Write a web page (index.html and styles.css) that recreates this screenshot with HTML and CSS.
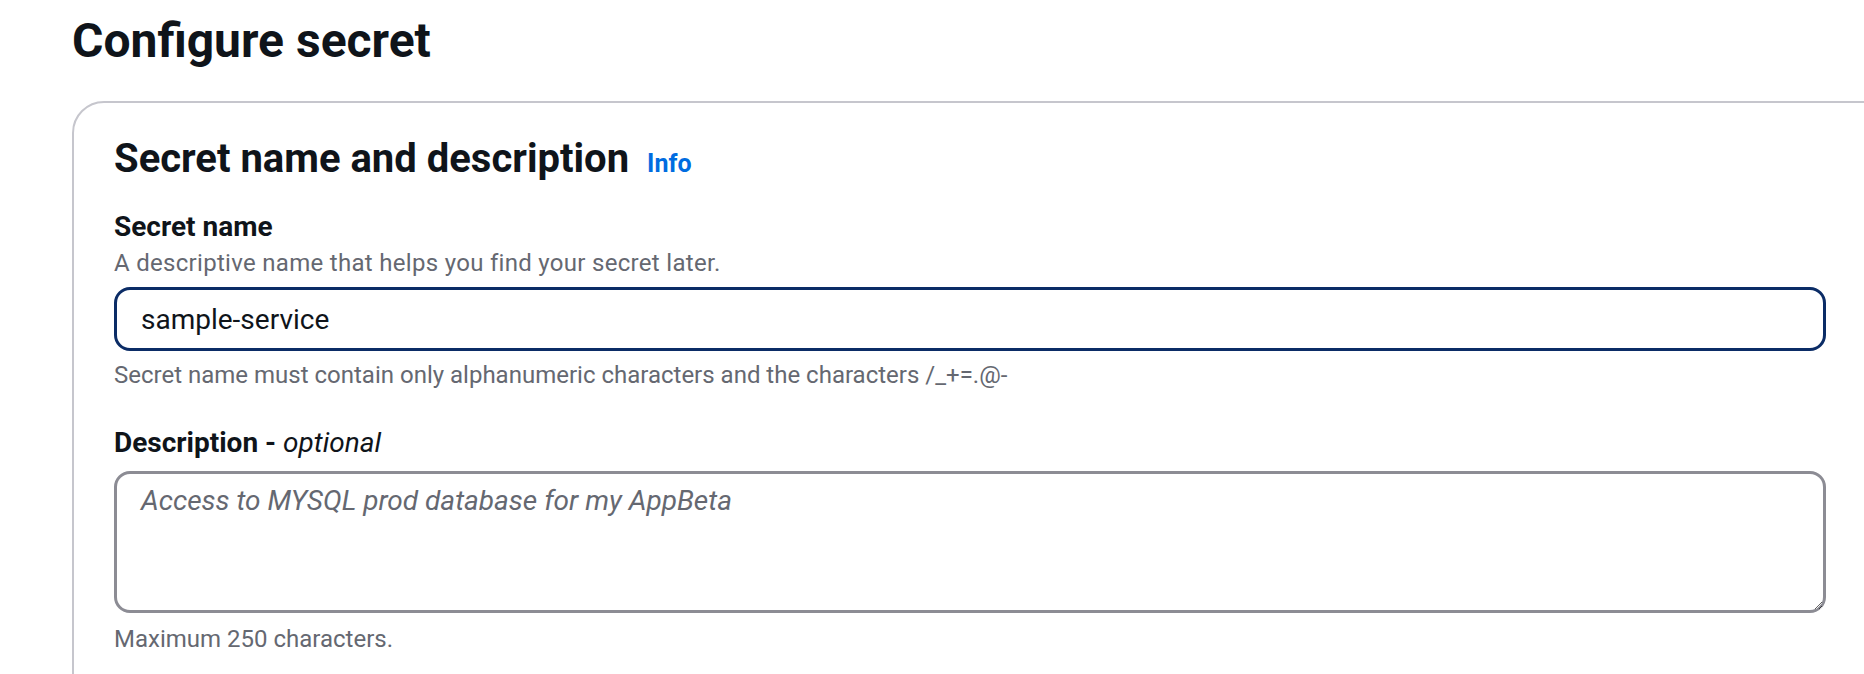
FILE: index.html
```html
<!DOCTYPE html>
<html lang="en">
<head>
    <meta charset="UTF-8">
    <meta name="viewport" content="width=device-width, initial-scale=1.0">
    <title>Configure secret</title>
    <link rel="stylesheet" href="styles.css">
</head>
<body>
    <h1 class="page-title">Configure secret</h1>

    <div class="container">
        <div class="container-header">
            <h2>Secret name and description</h2>
            <a class="info-link" href="#">Info</a>
        </div>

        <div class="form-field">
            <label class="field-label" for="secret-name">Secret name</label>
            <div class="field-description">A descriptive name that helps you find your secret later.</div>
            <input class="field-input" type="text" id="secret-name" value="sample-service">
            <div class="field-constraint">Secret name must contain only alphanumeric characters and the characters /_+=.@-</div>
        </div>

        <div class="form-field">
            <label class="field-label" for="secret-description">Description - <i>optional</i></label>
            <textarea class="field-textarea" id="secret-description" placeholder="Access to MYSQL prod database for my AppBeta"></textarea>
            <div class="field-constraint">Maximum 250 characters.</div>
        </div>
    </div>
</body>
</html>
```

FILE: styles.css
```css
body {
    font-family: Roboto, "Liberation Sans", Arial, sans-serif;
    color: #0f141a;
    background-color: #ffffff;
    margin: 0;
    padding: 0 0 0 72px;
    overflow: hidden;
}
.page-title {
    font-size: 48px;
    line-height: 60px;
    font-weight: 700;
    margin: 11px 0 30px 0;
}
/* container runs off the right edge of the view */
.container {
    border: 2px solid #c6c6cd;
    border-radius: 32px;
    margin-right: -60px;
    padding: 32px 96px 80px 40px;
}
.container-header {
    display: flex;
    align-items: baseline;
    gap: 18px;
    margin-bottom: 24px;
}
.container-header h2 {
    font-size: 40px;
    line-height: 48px;
    font-weight: 700;
    margin: 0;
}
.info-link {
    font-size: 25px;
    line-height: 32px;
    font-weight: 700;
    color: #006ce0;
    text-decoration: none;
}
.form-field {
    display: flex;
    flex-direction: column;
    margin-bottom: 32px;
}
.field-label {
    font-size: 28px;
    line-height: 40px;
    font-weight: 700;
}
.field-label i {
    font-weight: 400;
}
.field-description, .field-constraint {
    font-size: 24px;
    line-height: 32px;
    color: #656871;
}
.field-description {
    letter-spacing: 0.3px;
}
.field-input, .field-textarea {
    font-family: inherit;
    font-size: 28px;
    line-height: 40px;
    color: #0f141a;
    border-radius: 16px;
    padding: 7px 24px;
    margin: 8px 0;
    width: 100%;
    box-sizing: border-box;
    outline: none;
}
.field-input {
    height: 64px;
    border: 3px solid #0b2c66;
}
.field-textarea {
    height: 142px;
    border: 3px solid #8c8c94;
    margin-bottom: 10px;
    resize: vertical;
}
.field-textarea::placeholder {
    color: #656871;
    font-style: italic;
}
```
